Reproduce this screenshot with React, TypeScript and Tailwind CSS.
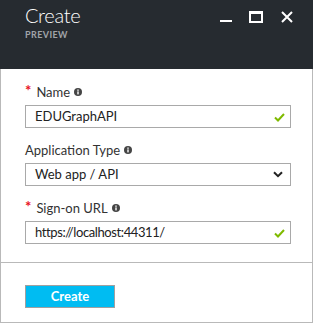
import React from 'react';

const font = { fontFamily: 'Lato, "Open Sans", "Liberation Sans", sans-serif' };

const Info: React.FC = () => (
  <svg width="8" height="8" viewBox="0 0 8 8" className="ml-[4px] inline-block">
    <circle cx="4" cy="4" r="4" fill="#454545" />
    <rect x="3.3" y="3.4" width="1.4" height="3" fill="#fff" />
    <rect x="3.3" y="1.5" width="1.4" height="1.3" fill="#fff" />
  </svg>
);

const Check: React.FC = () => (
  <svg width="11" height="9" viewBox="0 0 11 9" className="absolute right-[5px] top-[7px]">
    <path d="M1 4.5 L4 7.5 L10 1" fill="none" stroke="#7fba00" strokeWidth="2" />
  </svg>
);

const Label: React.FC<{ text: string; required?: boolean }> = ({ text, required }) => (
  <div className="flex items-center h-[16px] mb-[5px] text-[13px] leading-[16px] text-[#333]">
    {required && <span className="text-[#e81123] text-[15px] leading-none mr-[5px] -mt-[3px] font-bold">*</span>}
    <span>{text}</span>
    <Info />
  </div>
);

export default function App() {
  return (
    <div className="w-[313px] h-[323px] bg-white flex flex-col" style={font}>
      <header className="h-[69px] bg-[#262b30] px-[25px] flex justify-between shrink-0">
        <div className="pt-[4px]">
          <div className="text-white text-[20px] font-light leading-[23px] tracking-[-0.3px]">Create</div>
          <div className="text-[#a0a4a8] text-[9px] font-bold tracking-[0.4px] leading-[12px] mt-[2px]">PREVIEW</div>
        </div>
        <div className="flex items-start gap-[17px] pt-[11px] mr-[-15px] pr-[10px]">
          <svg width="12" height="12" viewBox="0 0 12 12">
            <rect x="0" y="9" width="12" height="2" fill="#fff" />
          </svg>
          <svg width="14" height="12" viewBox="0 0 14 12">
            <rect x="1" y="1.5" width="12" height="9.5" fill="none" stroke="#fff" strokeWidth="2" />
            <rect x="0" y="0" width="14" height="3" fill="#fff" />
          </svg>
          <svg width="12" height="12" viewBox="0 0 12 12" className="ml-[1px]">
            <path d="M1 1 L11 11 M11 1 L1 11" stroke="#fff" strokeWidth="2" />
          </svg>
        </div>
      </header>
      <div className="flex-1 border-x border-b border-[#b9b9b9] flex flex-col">
        <div className="px-[24px] pt-[15px]">
          <Label text="Name" required />
          <div className="relative h-[23px] w-[266px] border border-[#a9a9a9] px-[9px] text-[13px] leading-[21px] text-[#222]">
            EDUGraphAPI
            <Check />
          </div>
          <div className="h-[14px]" />
          <Label text="Application Type" />
          <div className="relative h-[23px] w-[266px] border border-[#a9a9a9] px-[9px] text-[13px] leading-[21px] text-[#222] flex justify-between items-center">
            <span>Web app / API</span>
            <svg width="10" height="7" viewBox="0 0 10 7" className="mr-[-2px]">
              <path d="M1 1.2 L5 5.2 L9 1.2" fill="none" stroke="#222" strokeWidth="2" />
            </svg>
          </div>
          <div className="h-[14px]" />
          <Label text="Sign-on URL" required />
          <div className="relative h-[23px] w-[266px] border border-[#a9a9a9] px-[9px] text-[13px] leading-[21px] text-[#222] tracking-[-0.4px]">
            https://localhost:44311/
            <Check />
          </div>
        </div>
        <div className="mt-[18px] border-t border-[#b9b9b9] px-[24px] pt-[20px]">
          <button className="w-[90px] h-[23px] bg-[#00bcf2] border border-[#a0a0a0] text-white text-[13px] font-bold leading-[20px]">
            Create
          </button>
        </div>
      </div>
    </div>
  );
}
